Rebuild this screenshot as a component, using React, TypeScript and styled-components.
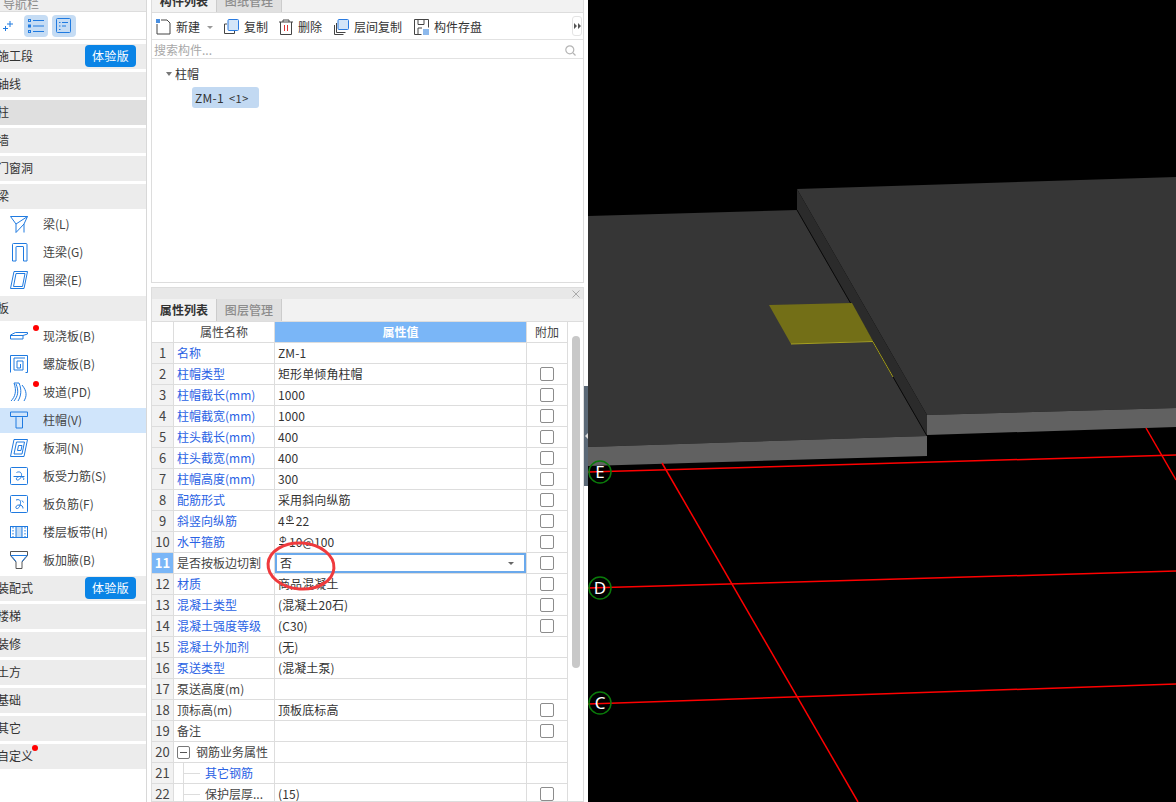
import React from "react";
import styled, { createGlobalStyle } from "styled-components";

const Global = createGlobalStyle`
  html, body { margin: 0; padding: 0; height: 802px; overflow: hidden; background: #fff; }
  * { box-sizing: border-box; }
  #root { height: 802px; font-family: "Noto Sans CJK SC", "Noto Sans", sans-serif; font-size: 12px; color: #333; }
`;

const Page = styled.div`display: flex; width: 1176px; height: 802px; overflow: hidden; background: #fff;`;

/* ---------- Navigation ---------- */
const Sidebar = styled.aside`width: 147px; flex: none; height: 802px; border-right: 1px solid #d8d8d8; display: flex; flex-direction: column; overflow: hidden;`;
const NavTitle = styled.div`height: 12px; flex: none; display: flex; align-items: flex-end; padding-left: 3px; overflow: hidden; background: #eee; color: #8a8a8a; border-bottom: 1px solid #ddd; line-height: 14px;`;
const NavTools = styled.div`height: 28px; flex: none; display: flex; align-items: center; gap: 4px; padding: 1px 0 0 3px; border-bottom: 1px solid #ddd;`;
const ToolGhost = styled.span`width: 16px; height: 22px; display: flex; align-items: center; margin-right: 1px;`;
const ToolBtn = styled.span`width: 24px; height: 22px; border-radius: 4px; background: #c5dcf4; display: flex; align-items: center; justify-content: center;`;
const NavList = styled.div`padding-top: 4px; display: flex; flex-direction: column;`;
const Section = styled.div<{ $active?: boolean; $after?: number }>`
  height: 25px; flex: none; margin-bottom: ${(p) => p.$after ?? 3}px;
  background: ${(p) => (p.$active ? "#dfdfdf" : "#ececec")};
  display: flex; align-items: center; justify-content: space-between; padding: 0 10px 2px 0; position: relative;
`;
const SectionText = styled.span`margin-left: -3px; color: #333; position: relative; white-space: nowrap; line-height: 16px;`;
const Badge = styled.span`width: 51px; height: 22px; background: #0a84e6; color: #fff; border-radius: 4px; display: flex; align-items: center; justify-content: center; font-size: 12px; line-height: 1; letter-spacing: 0.4px;`;
const Dot = styled.i<{ $lead?: boolean }>`
  position: absolute; width: 6px; height: 6px; border-radius: 50%; background: #f00; top: -3px;
  ${(p) => (p.$lead ? "left: -10px;" : "right: -5px;")}
`;
const Item = styled.div<{ $active?: boolean; $first?: boolean }>`
  height: 25px; flex: none; margin-top: ${(p) => (p.$first ? 3 : 0)}px; margin-bottom: 3px; display: flex; align-items: center; gap: 15px; padding: 0 0 2px 10px;
  background: ${(p) => (p.$active ? "#d0e5fb" : "transparent")};
`;
const ItemIcon = styled.span`width: 18px; height: 20px; flex: none; display: flex; align-items: center; justify-content: center;`;
const ItemText = styled.span`position: relative; white-space: nowrap; color: #444; line-height: 16px;`;

const B = "#1f7ae0";
const Svg = ({ w = 18, h = 20, children }: { w?: number; h?: number; children: React.ReactNode }) => (
  <svg width={w} height={h} viewBox={`0 0 ${w} ${h}`} fill="none" stroke={B} strokeWidth="1">{children}</svg>
);
const icons: Record<string, React.ReactNode> = {
  beam: <Svg><path d="M.5 2.500h17L14 10v8.500M.5 2.500L6 10v8.500M6 10l11.500-7.500M6 18.500L14 10" /></Svg>,
  link: <Svg><path d="M2.500 19V2.500q0-1 1-1h12.500q1 0 1 1V19h-3.500V5q0-.5-.5-.5H6.500Q6 4.500 6 5v14z" /></Svg>,
  ring: <Svg><path d="M4 1.500h13.500L14 18.500H.5zM6 3.500h9L12.500 16.500H3.500z" /></Svg>,
  cast: <Svg><path d="M.5 9l5-2.500h12V8L13 9.500V13H.5zM.5 9.500H13" /></Svg>,
  spiral: <Svg><path d="M.5 18.500V1.500h17v17h-2M15 4H4v12h9V7H7v7h3.500v-4" /></Svg>,
  ramp: <Svg><path d="M1 19c4-4 6-10 3-18h5c3 7 2 13-1 18M6 2c3 7 2 12-2 17M12 3c5 6 5 11 2 16" /></Svg>,
  cap: <Svg><path d="M.5 2h17v4.500H.5zM5 6.500l1 1v10.500h6.500V7.500l1-1" /></Svg>,
  hole: <Svg><path d="M4 1.500h13.500L14 18.500H.5zM6.500 4h8L12 16H4zM8.500 7.500h3.500L11 12.500H7.500z" /></Svg>,
  force: (<Svg><rect x=".5" y="1.500" width="17" height="17" rx="1" /><path d="M3.500 10.500h11M6.500 6.500c3-1.500 5.500 0 5 3s-3 5-4.500 4.500-.5-3.500 2.500-3.500 5 1 4 3.500" /></Svg>),
  neg: (<Svg><rect x=".5" y="1.500" width="17" height="17" rx="1" /><path d="M6 6c3-1 5 0 4.500 3.500S8 15 6.500 14.500 6 11 9 11s4 1.500 4 3.500M12 6.500l1.500 2" /></Svg>),
  band: (<svg width="18" height="20" viewBox="0 0 18 20" fill="none" stroke={B}><rect x=".5" y="4.500" width="17" height="11" /><rect x="6" y="5" width="6" height="10" fill="#c5dcf4" stroke="none" /><path d="M6 5v10M12 5v10" /><path d="M3 5v10M15 5v10" strokeDasharray="1.500 1.500" /></svg>),
  haunch: (<svg width="18" height="20" viewBox="0 0 18 20" fill="none"><path d="M.5 5.500v-4h17v4" stroke="#555" /><path d="M.5 5.500h17" stroke="#1f7ae0" /><path d="M.5 5.500L6 12v6.500h6V12l5.500-6.500" stroke="#555" /><path d="M2 6.500l4 5M16 6.500l-4 5" stroke="#1f7ae0" /></svg>),
};

/* ---------- Middle column ---------- */
const Middle = styled.section`width: 433px; flex: none; margin-left: 4px; display: flex; flex-direction: column; height: 802px; overflow: hidden;`;
const ListPanel = styled.div`height: 283px; flex: none; border: 1px solid #ddd; border-top: 0; display: flex; flex-direction: column;`;
const Tabs = styled.div<{ $clip?: boolean }>`
  height: ${(p) => (p.$clip ? 13 : 23)}px; flex: none; display: flex; align-items: flex-end; background: #f2f2f2; border-bottom: 1px solid #ddd; overflow: hidden;
`;
const Tab = styled.div<{ $on?: boolean }>`
  width: 65px; height: 22px; flex: none; display: flex; align-items: center; justify-content: center; font-weight: ${(p) => (p.$on ? 700 : 500)};
  background: ${(p) => (p.$on ? "#f2f2f2" : "#e0e0e0")}; color: ${(p) => (p.$on ? "#333" : "#8c8c8c")};
  border-right: 1px solid #ccc; line-height: 14px; letter-spacing: 0.1px;
`;
const Toolbar = styled.div`height: 27px; flex: none; display: flex; align-items: center; padding: 2px 0 0 4px; position: relative; border-bottom: 1px solid #e2e2e2;`;
const Tool = styled.span<{ $gap?: number }>`display: flex; align-items: center; gap: 5px; margin-right: ${(p) => p.$gap ?? 12}px; line-height: 14px; white-space: nowrap;`;
const Caret = styled.i`width: 0; height: 0; margin-left: 2px; border: 3px solid transparent; border-top: 3px solid #999; border-bottom: 0;`;
const MoreBtn = styled.span`position: absolute; right: 1px; top: 3px; width: 10px; height: 20px; border: 1px solid #e4e4e4; border-radius: 3px; display: flex; align-items: center; justify-content: center;`;
const Search = styled.div`height: 19px; flex: none; display: flex; align-items: center; justify-content: space-between; padding: 2px 7px 0 2px; color: #a8a8a8; border-bottom: 1px solid #e2e2e2; line-height: 14px;`;
const Tree = styled.div`flex: 1; padding: 7px 0 0 14px;`;
const TreeHead = styled.div`display: flex; align-items: center; gap: 3px; height: 16px; line-height: 16px;`;
const TreeCaret = styled.i`width: 0; height: 0; border: 3px solid transparent; border-top: 4px solid #777; border-bottom: 0;`;
const Pill = styled.div`margin: 5px 0 0 26px; width: 67px; height: 21px; background: #c2d9f2; border-radius: 3px; display: flex; align-items: center; padding-left: 3px; gap: 5px; line-height: 14px; letter-spacing: 0.3px;`;
const PillSub = styled.span`font-size: 11px; letter-spacing: 0.5px;`;

const CloseBar = styled.div`margin-top: 4px; height: 12px; flex: none; background: #e8e8e8; border: 1px solid #ddd; border-bottom: 0; display: flex; align-items: center; justify-content: flex-end; padding-right: 3px;`;
const PropPanel = styled.div`flex: 1; border: 1px solid #ddd; border-top: 0; display: flex; flex-direction: column; position: relative; overflow: hidden;`;
const TableWrap = styled.div`display: flex; flex: 1; min-height: 0;`;
const Table = styled.div`width: 416px; flex: none;`;
const Row = styled.div`display: grid; grid-template-columns: 22px 101px 252px 40px; height: 21px; border-bottom: 1px solid #ddd; border-right: 1px solid #ddd;`;
const Cell = styled.div`border-right: 1px solid #ddd; display: flex; align-items: center; padding-left: 3px; white-space: nowrap; overflow: hidden; line-height: 14px; position: relative; &:last-child { border-right: 0; }`;
const HeadCell = styled(Cell)<{ $on?: boolean }>`
  justify-content: center; padding: 0; color: ${(p) => (p.$on ? "#fff" : "#444")};
  background: ${(p) => (p.$on ? "#7ab6f7" : "#fff")}; font-weight: ${(p) => (p.$on ? 700 : 400)};
`;
const NumCell = styled(Cell)<{ $on?: boolean }>`
  justify-content: center; padding: 0; font-size: 13px; color: ${(p) => (p.$on ? "#fff" : "#444")};
  background: ${(p) => (p.$on ? "#7ab6f7" : "#f2f2f2")}; font-weight: ${(p) => (p.$on ? 700 : 400)};
`;
const NameCell = styled(Cell)<{ $blue?: boolean; $indent?: number }>`
  color: ${(p) => (p.$blue ? "#2a62e4" : "#444")}; padding-left: ${(p) => p.$indent ?? 3}px;
`;
const TreeLine = styled.i`position: absolute; left: 9px; top: 0; bottom: 0; width: 16px; border-left: 1px solid #ddd; &::after { content: ""; position: absolute; left: 0; top: 10px; width: 16px; border-top: 1px solid #ddd; }`;
const Collapse = styled.span`width: 13px; height: 13px; border: 1px solid #777; border-radius: 2px; margin-right: 6px; flex: none; position: relative; &::after { content: ""; position: absolute; left: 2px; right: 2px; top: 5px; border-top: 1px solid #555; }`;
const ValueCell = styled(Cell)`padding-left: 3px; letter-spacing: 0.1px;`;
const Editor = styled.div`position: absolute; inset: 0; border: 2px solid #6aa9ec; display: flex; align-items: center; justify-content: space-between; padding: 0 10px 0 3px; background: #fff;`;
const EditCaret = styled.i`width: 0; height: 0; border: 3px solid transparent; border-top: 3px solid #666; border-bottom: 0;`;
const CheckCell = styled(Cell)`justify-content: center; padding: 0;`;
const Check = styled.span`width: 14px; height: 14px; border: 1px solid #8c8c8c; border-radius: 2px; background: #fff;`;
const Rebar = styled.span`font-size: 9px; line-height: 8px; position: relative; top: -2px; margin: 0 2px 0 1px; border-bottom: 1px solid #333; width: 8px; text-align: center;`;
const Scroll = styled.div`flex: 1; padding: 14px 0 0 4px; background: #fff; position: relative;`;
const Thumb = styled.div`width: 8px; height: 332px; border-radius: 4px; background: #c8c8c8;`;
const Ring = styled.svg`position: absolute; left: 113px; top: 240px; pointer-events: none;`;

/* ---------- Splitter + canvas ---------- */
const Splitter = styled.div`width: 4px; flex: none; padding-top: 386px; height: 802px;`;
const Grip = styled.div`width: 4px; height: 100px; background: #5b6977; display: flex; align-items: center; justify-content: center;`;
const Canvas = styled.div`flex: 1; height: 802px; background: #000; overflow: hidden;`;
const Scene = styled.svg`display: block;`;

type R = { n: number; name: string; blue?: boolean; val?: React.ReactNode; check?: boolean };
const rows: R[] = [
  { n: 1, name: "名称", blue: true, val: "ZM-1" },
  { n: 2, name: "柱帽类型", blue: true, val: "矩形单倾角柱帽", check: true },
  { n: 3, name: "柱帽截长(mm)", blue: true, val: "1000", check: true },
  { n: 4, name: "柱帽截宽(mm)", blue: true, val: "1000", check: true },
  { n: 5, name: "柱头截长(mm)", blue: true, val: "400", check: true },
  { n: 6, name: "柱头截宽(mm)", blue: true, val: "400", check: true },
  { n: 7, name: "柱帽高度(mm)", blue: true, val: "300", check: true },
  { n: 8, name: "配筋形式", blue: true, val: "采用斜向纵筋", check: true },
  { n: 9, name: "斜竖向纵筋", blue: true, val: <>4<Rebar>Φ</Rebar>22</>, check: true },
  { n: 10, name: "水平箍筋", blue: true, val: <><Rebar>Φ</Rebar>10@100</>, check: true },
  { n: 11, name: "是否按板边切割", check: true },
  { n: 12, name: "材质", blue: true, val: "商品混凝土", check: true },
  { n: 13, name: "混凝土类型", blue: true, val: "(混凝土20石)", check: true },
  { n: 14, name: "混凝土强度等级", blue: true, val: "(C30)", check: true },
  { n: 15, name: "混凝土外加剂", blue: true, val: "(无)" },
  { n: 16, name: "泵送类型", blue: true, val: "(混凝土泵)" },
  { n: 17, name: "泵送高度(m)" },
  { n: 18, name: "顶标高(m)", val: "顶板底标高", check: true },
  { n: 19, name: "备注", check: true },
];

const Axis = ({ y, label }: { y: number; label: string }) => (
  <g>
    <circle cx="12" cy={y} r="11" stroke="#0a7a0a" strokeWidth="1.500" fill="none" />
    <text x="12" y={y + 6} fill="#fff" fontSize="17" textAnchor="middle" fontFamily="Noto Sans, sans-serif">{label}</text>
  </g>
);

export default function App() {
  return (
    <Page>
      <Global />
      <Sidebar>
        <NavTitle>导航栏</NavTitle>
        <NavTools>
          <ToolGhost>
            <svg width="10" height="12" viewBox="0 0 10 12" fill="none" stroke={B}><path d="M7 1v6M4 4h6M2.500 6v5M0 8.500h5" /></svg>
          </ToolGhost>
          <ToolBtn>
            <svg width="16" height="14" viewBox="0 0 16 14" fill="none" stroke={B}><path d="M5 1.500h11M5 7h11M5 12.500h11" /><rect x=".5" y=".5" width="2" height="2" /><rect x=".5" y="6" width="2" height="2" /><rect x=".5" y="11.500" width="2" height="2" /></svg>
          </ToolBtn>
          <ToolBtn>
            <svg width="16" height="16" viewBox="0 0 16 16" fill="none" stroke={B}><rect x=".5" y=".5" width="14" height="14" rx="1" /><path d="M3 4.500h1.500M6 4.500h6M3 8h1.500M6 8h4M3 11.500h1.500" /></svg>
          </ToolBtn>
        </NavTools>
        <NavList>
          <Section><SectionText>施工段</SectionText><Badge>体验版</Badge></Section>
          <Section><SectionText>轴线</SectionText></Section>
          <Section $active><SectionText>柱</SectionText></Section>
          <Section><SectionText>墙</SectionText></Section>
          <Section><SectionText>门窗洞</SectionText></Section>
          <Section $after={0}><SectionText>梁</SectionText></Section>
          <Item $first><ItemIcon>{icons.beam}</ItemIcon><ItemText>梁(L)</ItemText></Item>
          <Item><ItemIcon>{icons.link}</ItemIcon><ItemText>连梁(G)</ItemText></Item>
          <Item><ItemIcon>{icons.ring}</ItemIcon><ItemText>圈梁(E)</ItemText></Item>
          <Section $after={0}><SectionText>板</SectionText></Section>
          <Item $first><ItemIcon>{icons.cast}</ItemIcon><ItemText>现浇板(B)<Dot $lead /></ItemText></Item>
          <Item><ItemIcon>{icons.spiral}</ItemIcon><ItemText>螺旋板(B)</ItemText></Item>
          <Item><ItemIcon>{icons.ramp}</ItemIcon><ItemText>坡道(PD)<Dot $lead /></ItemText></Item>
          <Item $active><ItemIcon>{icons.cap}</ItemIcon><ItemText>柱帽(V)</ItemText></Item>
          <Item><ItemIcon>{icons.hole}</ItemIcon><ItemText>板洞(N)</ItemText></Item>
          <Item><ItemIcon>{icons.force}</ItemIcon><ItemText>板受力筋(S)</ItemText></Item>
          <Item><ItemIcon>{icons.neg}</ItemIcon><ItemText>板负筋(F)</ItemText></Item>
          <Item><ItemIcon>{icons.band}</ItemIcon><ItemText>楼层板带(H)</ItemText></Item>
          <Item><ItemIcon>{icons.haunch}</ItemIcon><ItemText>板加腋(B)</ItemText></Item>
          <Section><SectionText>装配式</SectionText><Badge>体验版</Badge></Section>
          <Section><SectionText>楼梯</SectionText></Section>
          <Section><SectionText>装修</SectionText></Section>
          <Section><SectionText>土方</SectionText></Section>
          <Section><SectionText>基础</SectionText></Section>
          <Section><SectionText>其它</SectionText></Section>
          <Section><SectionText>自定义<Dot /></SectionText></Section>
        </NavList>
      </Sidebar>

      <Middle>
        <ListPanel>
          <Tabs $clip><Tab $on>构件列表</Tab><Tab>图纸管理</Tab></Tabs>
          <Toolbar>
            <Tool $gap={11}>
              <svg width="15" height="16" viewBox="0 0 15 16" fill="none" stroke="#444"><path d="M1 5v10h13V4l-3-3H5" /><rect x="0" y="0" width="4" height="4" fill="#4a8fe0" stroke="none" /></svg>
              新建<Caret />
            </Tool>
            <Tool $gap={11}>
              <svg width="15" height="16" viewBox="0 0 15 16" fill="none"><path d="M3 5H.5v9.500h10V12" stroke="#444" /><rect x="4" y=".5" width="10.500" height="11" rx="1" fill="#d3e5f8" stroke="#2a7be0" /></svg>
              复制
            </Tool>
            <Tool>
              <svg width="14" height="16" viewBox="0 0 14 16" fill="none" stroke="#444"><path d="M0 3h14M4 3V1h6v2M1.500 3v12.500h11V3" /><path d="M5.500 6v6M8.500 6v6" stroke="#d33" /></svg>
              删除
            </Tool>
            <Tool>
              <svg width="15" height="16" viewBox="0 0 15 16" fill="none"><path d="M.5 6v9.500h9M2.500 4v9.500h9" stroke="#444" /><rect x="4" y=".5" width="10.500" height="10" rx="1" fill="#d3e5f8" stroke="#2a7be0" /></svg>
              层间复制
            </Tool>
            <Tool $gap={0}>
              <svg width="15" height="16" viewBox="0 0 15 16" fill="none"><path d="M.5 15.500V.5h14v8M.5 15.500h7M4 .5v5h6V.5M4 15V9h4" stroke="#444" /><rect x="9" y="10" width="6" height="6" fill="#8db9ec" /></svg>
              构件存盘
            </Tool>
            <MoreBtn>
              <svg width="7" height="6" viewBox="0 0 7 6" fill="#555"><path d="M0 0l3 3-3 3zM4 0l3 3-3 3z" /></svg>
            </MoreBtn>
          </Toolbar>
          <Search>
            搜索构件...
            <svg width="11" height="11" viewBox="0 0 11 11" fill="none" stroke="#b5b5b5" strokeWidth="1.200"><circle cx="4.800" cy="4.800" r="4" /><path d="M8 8l2.500 2.500" /></svg>
          </Search>
          <Tree>
            <TreeHead><TreeCaret />柱帽</TreeHead>
            <Pill>ZM-1<PillSub>&lt;1&gt;</PillSub></Pill>
          </Tree>
        </ListPanel>

        <CloseBar>
          <svg width="8" height="8" viewBox="0 0 8 8" stroke="#aaa"><path d="M.5.5l7 7M7.500.5l-7 7" /></svg>
        </CloseBar>
        <PropPanel>
          <Tabs><Tab $on>属性列表</Tab><Tab>图层管理</Tab></Tabs>
          <TableWrap>
            <Table>
              <Row>
                <HeadCell />
                <HeadCell>属性名称</HeadCell>
                <HeadCell $on>属性值</HeadCell>
                <HeadCell>附加</HeadCell>
              </Row>
              {rows.map((r) => (
                <Row key={r.n}>
                  <NumCell $on={r.n === 11}>{r.n}</NumCell>
                  <NameCell $blue={r.blue}>{r.name}</NameCell>
                  {r.n === 11 ? (
                    <ValueCell><Editor>否<EditCaret /></Editor></ValueCell>
                  ) : (
                    <ValueCell>{r.val}</ValueCell>
                  )}
                  <CheckCell>{r.check && <Check />}</CheckCell>
                </Row>
              ))}
              <Row>
                <NumCell>20</NumCell>
                <NameCell><Collapse />钢筋业务属性</NameCell>
                <ValueCell />
                <CheckCell />
              </Row>
              <Row>
                <NumCell>21</NumCell>
                <NameCell $blue $indent={31}><TreeLine />其它钢筋</NameCell>
                <ValueCell />
                <CheckCell />
              </Row>
              <Row>
                <NumCell>22</NumCell>
                <NameCell $indent={31}><TreeLine />保护层厚...</NameCell>
                <ValueCell>(15)</ValueCell>
                <CheckCell><Check /></CheckCell>
              </Row>
            </Table>
            <Scroll><Thumb /></Scroll>
          </TableWrap>
          <Ring width="72" height="54" viewBox="0 0 72 54" fill="none">
            <ellipse cx="36" cy="27" rx="33" ry="23" stroke="#ef3a3d" strokeWidth="3" transform="rotate(4 36 27)" />
          </Ring>
        </PropPanel>
      </Middle>

      <Splitter>
        <Grip>
          <svg width="4" height="6" viewBox="0 0 4 6" fill="#ddd"><path d="M4 0v6L1 3z" /></svg>
        </Grip>
      </Splitter>

      <Canvas>
        <Scene width="588" height="802" viewBox="588 0 588 802">
          {/* second slab */}
          <polygon points="797,189 1176,177 1176,408 927,415" fill="#363636" />
          <polygon points="797,189 797,210 927,436 927,415" fill="#2b2b2b" />
          <polygon points="927,415 1176,408 1176,427 927,435" fill="#616161" />
          {/* first slab */}
          <polygon points="588,216 797,210 927,436 588,447" fill="#363636" />
          <polygon points="588,447 927,436 927,456 588,466" fill="#616161" />
          <line x1="797" y1="210" x2="927" y2="436" stroke="#0a0a0a" strokeWidth="1" />
          {/* column cap */}
          <polygon points="769,305 852,303 873,341 791,344" fill="#736f17" />
          <line x1="791" y1="344" x2="873" y2="341.500" stroke="#a6a020" strokeWidth="1" />
          <line x1="873" y1="342" x2="893" y2="377" stroke="#a6a020" strokeWidth="1" />
          {/* grid */}
          <g stroke="#f00" strokeWidth="1.500">
            <line x1="588" y1="472" x2="1176" y2="455" />
            <line x1="588" y1="588" x2="1176" y2="571" />
            <line x1="588" y1="704" x2="1176" y2="684" />
            <line x1="662" y1="463" x2="858" y2="802" />
            <line x1="1146" y1="428" x2="1176" y2="480" />
          </g>
          <g transform="translate(588 0)">
            <Axis y={472} label="E" />
            <Axis y={588} label="D" />
            <Axis y={703} label="C" />
          </g>
        </Scene>
      </Canvas>
    </Page>
  );
}
